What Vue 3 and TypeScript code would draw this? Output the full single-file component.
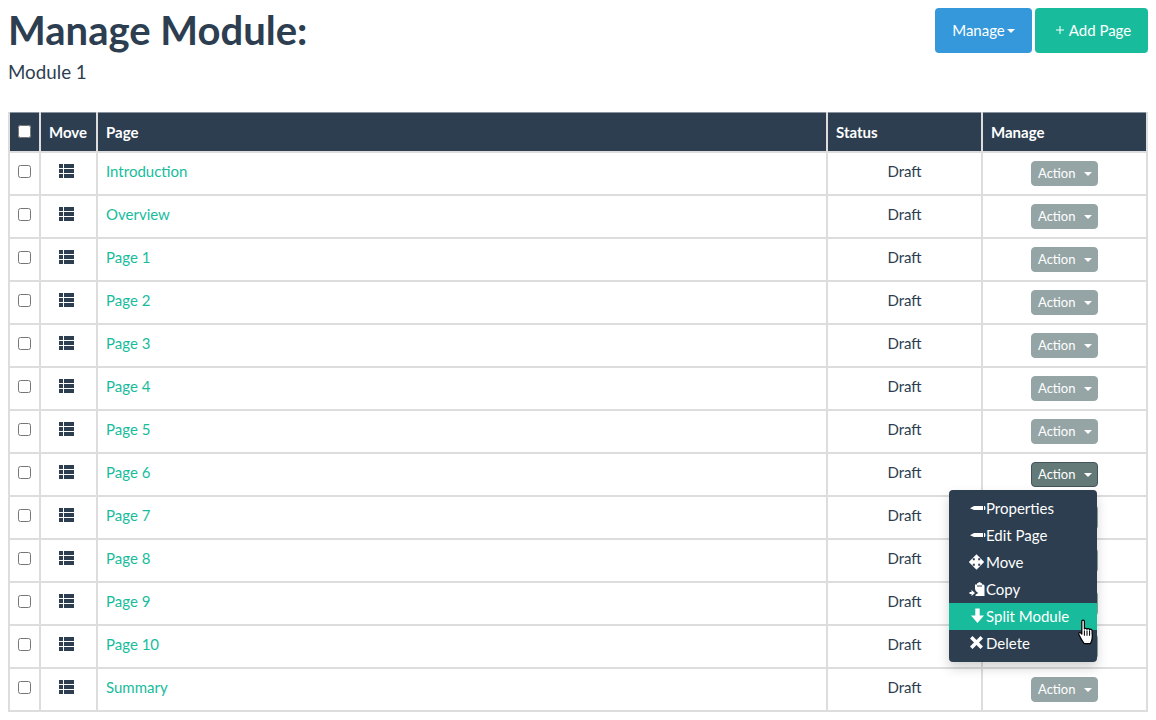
<script setup lang="ts">
const rows: string[] = ['Introduction', 'Overview', 'Page 1', 'Page 2', 'Page 3', 'Page 4', 'Page 5', 'Page 6', 'Page 7', 'Page 8', 'Page 9', 'Page 10', 'Summary']
const openRow = 'Page 6'
const menu: { label: string; icon: string; active?: boolean }[] = [
  { label: 'Properties', icon: 'pencil' },
  { label: 'Edit Page', icon: 'pencil' },
  { label: 'Move', icon: 'move' },
  { label: 'Copy', icon: 'copy' },
  { label: 'Split Module', icon: 'down', active: true },
  { label: 'Delete', icon: 'x' },
]
</script>

<template>
  <div class="page">
    <header class="head">
      <div>
        <h1>Manage Module:</h1>
        <p class="sub">Module 1</p>
      </div>
      <div class="actions">
        <button class="btn blue">Manage<span class="caret"></span></button>
        <button class="btn green">
          <svg class="plus" width="8" height="8" viewBox="0 0 8 8"><path d="M4 0v8M0 4h8" stroke="#fff" stroke-width="1" fill="none" /></svg>
          Add Page
        </button>
      </div>
    </header>

    <table>
      <colgroup>
        <col class="c1" /><col class="c2" /><col /><col class="c4" /><col class="c5" />
      </colgroup>
      <thead>
        <tr>
          <th class="center"><input type="checkbox" /></th>
          <th>Move</th>
          <th>Page</th>
          <th>Status</th>
          <th>Manage</th>
        </tr>
      </thead>
      <tbody>
        <tr v-for="r in rows" :key="r">
          <td class="center"><input type="checkbox" /></td>
          <td class="center">
            <svg class="list" width="15" height="14" viewBox="0 0 15 14" fill="#2c3e50">
              <rect x="0" y="0" width="4" height="4" /><rect x="5" y="0" width="10" height="4" />
              <rect x="0" y="5" width="4" height="4" /><rect x="5" y="5" width="10" height="4" />
              <rect x="0" y="10" width="4" height="4" /><rect x="5" y="10" width="10" height="4" />
            </svg>
          </td>
          <td><a class="link">{{ r }}</a></td>
          <td class="center">Draft</td>
          <td class="center">
            <div class="drop">
              <button class="act" :class="{ open: r === openRow }">Action <span class="caret wide"></span></button>
              <ul v-if="r === openRow" class="menu">
                <li v-for="m in menu" :key="m.label" :class="{ on: m.active }">
                  <svg class="mi" width="17" height="16" viewBox="0 0 17 16" fill="#fff">
                    <path v-if="m.icon === 'pencil'" d="M1 8.300 5 6H14V10H5zM15 6H16Q17 8 16 10H15z" />
                    <path v-else-if="m.icon === 'move'" transform="translate(-.5 0)" d="M8 .3 12 4.300H9.700V6.300H11.700V4L15.700 8 11.700 12V9.700H9.700V11.700H12L8 15.700 4 11.700H6.300V9.700H4.300V12L.3 8 4.300 4V6.300H6.300V4.300H4z" />
                    <path v-else-if="m.icon === 'copy'" fill-rule="evenodd" d="M6 3.500H8V2.500L10.500 1 13 2.500V3.500H14.500L15.500 4.500V15H6.500V13.700L9.200 12 6.500 9.800V8.500H6zM8 4.500V5.500H13V4.500zM.5 11H2.500V9L6 12 2.500 15V13H.5z" />
                    <path v-else-if="m.icon === 'down'" d="M6.300 .5H10.700V7.500H15L8.500 15 2 7.500H6.300z" />
                    <path v-else d="M3.500 1 7.500 5 11.500 1 14 3.500 10 7.500 14 11.500 11.500 14 7.500 10 3.500 14 1 11.500 5 7.500 1 3.500z" />
                  </svg>{{ m.label }}
                </li>
              </ul>
              <svg v-if="r === openRow" class="hand" width="18" height="26" viewBox="0 0 17 25">
                <path d="M3.500 2.200c0-1.600 2.500-1.600 2.500 0V9.500c0-.6 2.400-.8 2.500.4.100-.9 2.400-.9 2.500.5.300-.9 2.300-.7 2.400.7.100 1-.1 1.500.2 4.500.2 2.800-.7 6-1.700 8H5.800C4 21.400 1.200 16 .7 14.900c-.6-1.600 1-2.400 2-1.400l.8 1z" fill="#fff" stroke="#000" stroke-width="1.200" stroke-linejoin="round" />
                <path d="M6 11v5M8.500 11v5M11 11v5" stroke="#000" stroke-width="1" fill="none" />
              </svg>
            </div>
          </td>
        </tr>
      </tbody>
    </table>
  </div>
</template>

<style>
html, body { margin: 0; background: #fff; }
</style>

<style scoped>
.page {
  padding: 8px;
  width: 1140px;
  font-family: Lato, sans-serif;
  font-size: 15px;
  line-height: 21.43px;
  color: #2c3e50;
}
.head {
  display: flex;
  justify-content: space-between;
  align-items: flex-start;
  height: 104px;
}
h1 {
  margin: 0;
  font-size: 40px;
  font-weight: 700;
  line-height: 45px;
}
.sub {
  margin: 6px 0 0;
  font-size: 18.75px;
  line-height: 26px;
}
.actions { display: flex; gap: 3px; }
.btn {
  height: 45px;
  border: 0;
  border-radius: 4px;
  color: #fff;
  font: 15px/21px Lato, sans-serif;
  display: flex;
  align-items: center;
  justify-content: center;
  padding: 0;
}
.blue { width: 97px; background: #3498db; }
.green { width: 113px; background: #18bc9c; padding-left: 4px; }
.plus { margin-right: 5px; margin-top: -1px; }
.caret {
  display: inline-block;
  width: 0;
  height: 0;
  margin-left: 2px;
  border-top: 4px solid #fff;
  border-left: 4px solid transparent;
  border-right: 4px solid transparent;
}
.caret.wide { margin-left: 5px; vertical-align: middle; }
table {
  border-collapse: collapse;
  table-layout: fixed;
  width: 1140px;
}
.c1 { width: 31px; }
.c2 { width: 57px; }
.c4 { width: 155px; }
.c5 { width: 165px; }
th, td {
  border: 2px solid #ddd;
  padding: 8px;
  vertical-align: top;
  text-align: left;
  box-sizing: border-box;
}
th {
  background: #2c3e50;
  color: #fff;
  font-weight: 700;
  border-top: 1px solid #8a949e;
  height: 39px;
  padding: 9px 8px 6px;
}
.center { text-align: center; }
th.center, td.center:first-child { padding: 0; }
td { height: 43px; }
input[type='checkbox'] {
  display: block;
  margin: 12px auto 0;
  width: 13px;
  height: 13px;
}
.list { display: block; margin: 3px 0 0 10px; }
.link { color: #18bc9c; }
.drop { position: relative; display: inline-block; vertical-align: top; width: 67px; }
.act {
  display: block;
  width: 67px;
  height: 25px;
  border: 1px solid #95a5a6;
  border-radius: 4px;
  background: #95a5a6;
  color: #fff;
  font: 13px/18px Lato, sans-serif;
  padding: 0 0 1px 6px;
  text-align: left;
}
.act.open { background: #647a78; border-color: #42555a; }
.menu {
  position: absolute;
  z-index: 3;
  top: 28px;
  right: 1px;
  width: 148px;
  box-sizing: border-box;
  margin: 0;
  padding: 5px 0;
  list-style: none;
  background: #2c3e50;
  border-radius: 4px;
  box-shadow: 0 6px 12px rgba(0, 0, 0, 0.175);
  text-align: left;
}
.menu li {
  display: flex;
  align-items: center;
  height: 27px;
  box-sizing: border-box;
  padding: 1px 0 0 20px;
  color: #fff;
}
.menu li.on { background: #18bc9c; }
.mi { flex: none; margin-top: -1px; }
.hand { position: absolute; z-index: 4; left: 47px; top: 157px; }
</style>
